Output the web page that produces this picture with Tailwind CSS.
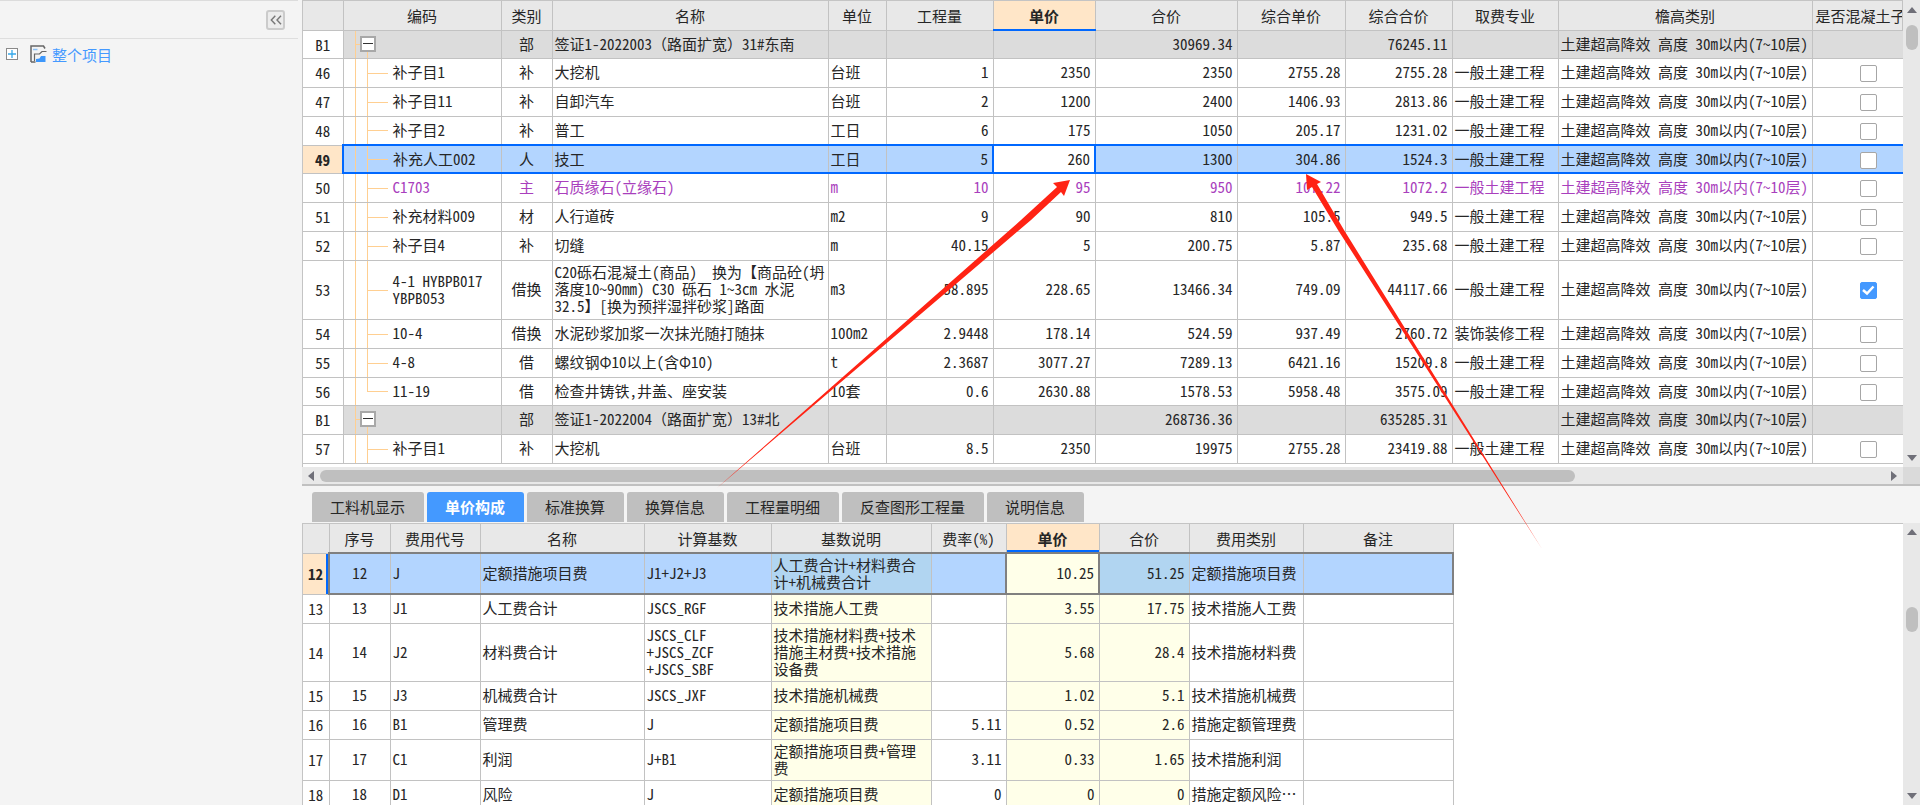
<!DOCTYPE html>
<html lang="zh-CN">
<head>
<meta charset="utf-8">
<title>整个项目</title>
<script src="https://cdn.jsdelivr.net/npm/@tailwindcss/browser@4"></script>
</head>
<body class="relative flex h-screen overflow-hidden bg-[#f4f4f4] font-['Noto_Sans_Mono_CJK_SC','Noto_Sans_CJK_SC',sans-serif] text-[15px] leading-[17px] text-[#262626]">

<aside class="w-[298px] shrink-0 border-t border-[#dcdcdc]">
  <div class="flex h-[38px] items-center justify-end border-b border-[#dedede] pr-[13px]">
    <button type="button" aria-label="收起" class="flex h-5 w-[19px] items-center justify-center rounded-[3px] border-2 border-[#cbcbcb] bg-[#ececec]">
      <svg class="h-[10px] w-[12px]" viewBox="0 0 12 10" fill="none" stroke="#777" stroke-width="1.4"><path d="M5.3 .7 1.3 5l4 4.3M11 .7 7 5l4 4.3"/></svg>
    </button>
  </div>
  <div class="flex items-center pt-[6px] pl-[6px]">
    <button type="button" aria-label="展开" class="flex size-[12px] items-center justify-center border border-[#8a8a8a] bg-white">
      <svg class="size-[8px]" viewBox="0 0 8 8" stroke="#35a8ea" stroke-width="1.3"><path d="M0 4h8M4 0v8"/></svg>
    </button>
    <svg class="ml-[12px] h-[18px] w-[17px]" viewBox="0 0 17 18" fill="none"><path d="M1 17V1h12.500l1.500 2.500" stroke="#666" stroke-width="1.500"/><path d="M1 17h4.500" stroke="#666" stroke-width="1.500"/><path d="M3 4.500h4.500" stroke="#8cc0f5" stroke-width="1.500"/><path d="M4.500 16V9H9.500L12 6.500H16.500" stroke="#666" stroke-width="1.200"/><path d="M6 17v-3l3.500-.500 1.500-2.500H15.500V17z" fill="#3d97fb"/></svg>
    <a href="#" class="ml-[5px] text-[#4499ff]">整个项目</a>
  </div>
</aside>

<main class="ml-[4px] flex min-w-0 flex-1 flex-col">
  <section class="flex h-[467px] shrink-0">
    <div class="min-w-0 flex-1 overflow-hidden border-t border-l border-[#c4c4c4] bg-white">
      <table id="items" class="w-full table-fixed border-collapse">
        <colgroup><col class="w-[40px]"><col class="w-[158px]"><col class="w-[51px]"><col class="w-[276px]"><col class="w-[58px]"><col class="w-[107px]"><col class="w-[102px]"><col class="w-[142px]"><col class="w-[108px]"><col class="w-[107px]"><col class="w-[106px]"><col class="w-[254px]"><col></colgroup>
        <thead>
          <tr class="h-[29px] bg-[#e8e8e8] *:border-r *:border-b *:border-[#c2c2c2] *:p-0 *:font-normal">
            <td></td><th>编码</th><th>类别</th><th>名称</th><th>单位</th><th>工程量</th>
            <th class="border-b-2! border-b-[#0068ff]! bg-[#ffe6c8]"><b class="font-bold">单价</b></th>
            <th>合价</th><th>综合单价</th><th>综合合价</th><th>取费专业</th><th>檐高类别</th><th class="overflow-hidden pl-[3px]! text-left whitespace-nowrap">是否混凝土子</th>
          </tr>
        </thead>
        <tbody></tbody>
      </table>
    </div>
    <div class="flex w-[17px] shrink-0 flex-col items-center bg-[#e8e8e8] pt-[7px] pb-[6px]">
      <svg class="h-[6px] w-[10px]" viewBox="0 0 10 6" fill="#6f6f78"><path d="M5 0l5 6H0z"/></svg>
      <div class="mt-3 h-[25px] w-[12px] rounded-full bg-[#bfbfbf]"></div>
      <svg class="mt-auto h-[6px] w-[10px]" viewBox="0 0 10 6" fill="#6f6f78"><path d="M0 0h10L5 6z"/></svg>
    </div>
  </section>

  <div class="flex h-[17px] shrink-0 bg-[#e8e8e8]">
    <div class="flex flex-1 items-center pr-[6px] pl-[6px]">
      <svg class="h-[10px] w-[6px]" viewBox="0 0 6 10" fill="#6f6f78"><path d="M6 0v10L0 5z"/></svg>
      <div class="ml-[6px] h-[12px] w-[79%] rounded-full bg-[#bfbfbf]"></div>
      <svg class="ml-auto h-[10px] w-[6px]" viewBox="0 0 6 10" fill="#6f6f78"><path d="M0 0v10l6-5z"/></svg>
    </div>
    <div class="w-[17px] bg-[#dadada]"></div>
  </div>

  <nav class="flex h-[39px] shrink-0 items-end gap-[3px] border-t-2 border-[#c0c0c0] pb-[1px] pl-[10px] *:h-[30px] *:rounded-t-[3px] *:border-r *:border-transparent *:px-[18px] *:pb-[1px] *:not-aria-pressed:bg-[#bfbfbf]">
    <button type="button">工料机显示</button>
    <button type="button" aria-pressed="true" class="bg-[#4499ff] font-bold text-white">单价构成</button>
    <button type="button">标准换算</button>
    <button type="button">换算信息</button>
    <button type="button">工程量明细</button>
    <button type="button">反查图形工程量</button>
    <button type="button">说明信息</button>
  </nav>

  <section class="flex min-h-0 flex-1">
    <div class="min-w-0 flex-1 overflow-hidden border-t border-l border-[#c4c4c4] bg-white">
      <table id="fees" class="w-[1150px] table-fixed border-collapse">
        <colgroup><col class="w-[26px]"><col class="w-[61px]"><col class="w-[90px]"><col class="w-[164px]"><col class="w-[127px]"><col class="w-[160px]"><col class="w-[75px]"><col class="w-[93px]"><col class="w-[90px]"><col class="w-[114px]"><col class="w-[150px]"></colgroup>
        <thead>
          <tr class="h-[29px] bg-[#e8e8e8] *:border-r *:border-b *:border-[#c2c2c2] *:p-0 *:font-normal">
            <td></td><th>序号</th><th>费用代号</th><th>名称</th><th>计算基数</th><th>基数说明</th><th>费率(%)</th>
            <th class="bg-[#ffe6c8] shadow-[inset_0_-2px_0_#0068ff]"><b class="font-bold">单价</b></th>
            <th>合价</th><th>费用类别</th><th>备注</th>
          </tr>
        </thead>
        <tbody></tbody>
      </table>
    </div>
    <div class="flex w-[17px] shrink-0 flex-col items-center bg-[#e8e8e8] pt-[6px] pb-[6px]">
      <svg class="h-[6px] w-[10px]" viewBox="0 0 10 6" fill="#6f6f78"><path d="M5 0l5 6H0z"/></svg>
      <div class="mt-[72px] h-[25px] w-[12px] rounded-full bg-[#bfbfbf]"></div>
      <svg class="mt-auto h-[6px] w-[10px]" viewBox="0 0 10 6" fill="#6f6f78"><path d="M0 0h10L5 6z"/></svg>
    </div>
  </section>
</main>

<svg class="pointer-events-none absolute top-0 left-0 h-[805px] w-[1920px]" viewBox="0 0 1920 805" fill="#ff2314">
  <path d="M717 488 1021 220 1057 187 1053 183 1070 180 1064 196 1061 192 1031 220z"/>
  <path d="M1542 549 1338 230 1312 187 1307 190 1306 174 1321 182 1317 184 1344 230z"/>
</svg>

<script>
const H = '土建超高降效 高度 30m以内(7~10层)', G = '一般土建工程';
const items = [
  ['B1','','部','签证1-2022003（路面扩宽）31#东南','','','','30969.34','','76245.11','','h-[28px]'],
  ['46','补子目1','补','大挖机','台班','1','2350','2350','2755.28','2755.28',G,'h-[29px]'],
  ['47','补子目11','补','自卸汽车','台班','2','1200','2400','1406.93','2813.86',G,'h-[29px]'],
  ['48','补子目2','补','普工','工日','6','175','1050','205.17','1231.02',G,'h-[29px]'],
  ['49','补充人工002','人','技工','工日','5','260','1300','304.86','1524.3',G,'h-[28px]'],
  ['50','C1703','主','石质缘石(立缘石)','m','10','95','950','107.22','1072.2',G,'h-[29px]'],
  ['51','补充材料009','材','人行道砖','m2','9','90','810','105.5','949.5',G,'h-[29px]'],
  ['52','补子目4','补','切缝','m','40.15','5','200.75','5.87','235.68',G,'h-[29px]'],
  ['53','4-1 HYBPB017<br>YBPB053','借换','C20砾石混凝土(商品)&nbsp; 换为【商品砼(坍<br>落度10~90mm) C30 砾石 1~3cm 水泥<br>32.5】[换为预拌湿拌砂浆]路面','m3','58.895','228.65','13466.34','749.09','44117.66',G,'h-[59px]'],
  ['54','10-4','借换','水泥砂浆加浆一次抹光随打随抹','100m2','2.9448','178.14','524.59','937.49','2760.72','装饰装修工程','h-[29px]'],
  ['55','4-8','借','螺纹钢Φ10以上(含Φ10)','t','2.3687','3077.27','7289.13','6421.16','15209.8',G,'h-[29px]'],
  ['56','11-19','借','检查井铸铁,井盖、座安装','10套','0.6','2630.88','1578.53','5958.48','3575.09',G,'h-[28px]'],
  ['B1','','部','签证1-2022004（路面扩宽）13#北','','','','268736.36','','635285.31','','h-[29px]'],
  ['57','补子目1','补','大挖机','台班','8.5','2350','19975','2755.28','23419.88',G,'h-[29px]'],
];
const cell = 'border-r border-b border-[#c2c2c2] p-0';
const body = cell + ' pb-[2px]';
const mid = body + ' text-center';
const left = body + ' px-[2px] whitespace-nowrap';
const right = body + ' px-[4px] text-right';
const blueEdge = ' border-t-2! border-b-2! border-t-[#0068ff]! border-b-[#0068ff]!';
const grayEdge = ' border-t-2! border-b-2! border-t-[#808080]! border-b-[#808080]!';

function tree(r) {
  const trunk = '<i class="absolute inset-y-0 left-[11px] w-px bg-[#ffcf91]"></i>';
  if (r[0] === 'B1') return trunk +
    '<i class="absolute top-[13px] left-[11px] h-px w-[6px] bg-[#ffcf91]"></i>' +
    '<i class="absolute top-[20px] bottom-0 left-[23px] w-px bg-[#ffcf91]"></i>' +
    '<button type="button" aria-label="折叠" class="absolute top-[5px] left-[16px] flex size-[16px] items-center justify-center border-2 border-[#a8a8a8] bg-white"><i class="h-px w-[10px] bg-[#333]"></i></button>';
  const branch = r[0] === '56'
    ? '<i class="absolute top-0 left-[23px] h-1/2 w-px bg-[#ffcf91]"></i>'
    : '<i class="absolute inset-y-0 left-[23px] w-px bg-[#ffcf91]"></i>';
  return trunk + branch + '<i class="absolute top-1/2 left-[23px] h-px w-[21px] bg-[#ffcf91]"></i><span>' + r[1] + '</span>';
}

document.querySelector('#items tbody').innerHTML = items.map(r => {
  const sel = r[0] === '49', group = r[0] === 'B1';
  const e = sel ? blueEdge : '';
  const tone = sel ? 'bg-[#b3d5ff]' : group ? 'bg-[#dcdcdc]' : r[0] === '50' ? 'text-[#a93fbd]' : '';
  return `<tr class="${tone} ${r[11]}">
    <th scope="row" class="${cell} ${sel ? 'bg-[#ffe6c8] font-bold' : 'bg-white font-normal'} text-[#262626] ">${r[0]}</th>
    <td class="${body} relative pl-[49px] ${sel ? blueEdge + ' border-l-2! border-l-[#0068ff]!' : ''}">${tree(r)}</td>
    <td class="${mid} ${e}">${r[2]}</td>
    <td class="${left} ${e}">${r[3]}</td>
    <td class="${left} ${e}">${r[4]}</td>
    <td class="${right} ${e}">${r[5]}</td>
    <td class="${right} ${sel ? 'border-2! border-[#0068ff]! bg-white' : ''}">${r[6]}</td>
    <td class="${right} ${e}">${r[7]}</td>
    <td class="${right} ${e}">${r[8]}</td>
    <td class="${right} ${e}">${r[9]}</td>
    <td class="${left} ${e}">${r[10]}</td>
    <td class="${left} ${e}">${H}</td>
    <td class="border-b border-[#c2c2c2] p-0 pl-[22px] text-center ${e}">${group ? '' :
      `<label class="relative inline-flex align-middle"><input type="checkbox" aria-label="是否混凝土子目 ${r[0]}" ${r[0] === '53' ? 'checked' : ''} class="peer size-[17px] appearance-none rounded-[2px] border border-[#a6a6a6] bg-white checked:border-[#4499ff] checked:bg-[#4499ff]"><svg class="absolute inset-0 hidden size-[17px] peer-checked:block" viewBox="0 0 17 17" fill="none" stroke="#fff" stroke-width="2.500"><path d="M3 8 7 11.500l6.500-7"/></svg></label>`}</td>
  </tr>`;
}).join('');

const fees = [
  ['12','J','定额措施项目费','J1+J2+J3','人工费合计+材料费合计+机械费合计','','10.25','51.25','定额措施项目费','h-[41px]'],
  ['13','J1','人工费合计','JSCS_RGF','技术措施人工费','','3.55','17.75','技术措施人工费','h-[29px]'],
  ['14','J2','材料费合计','JSCS_CLF<br>+JSCS_ZCF<br>+JSCS_SBF','技术措施材料费+技术措施主材费+技术措施设备费','','5.68','28.4','技术措施材料费','h-[58px]'],
  ['15','J3','机械费合计','JSCS_JXF','技术措施机械费','','1.02','5.1','技术措施机械费','h-[29px]'],
  ['16','B1','管理费','J','定额措施项目费','5.11','0.52','2.6','措施定额管理费','h-[29px]'],
  ['17','C1','利润','J+B1','定额措施项目费+管理费','3.11','0.33','1.65','技术措施利润','h-[41px]'],
  ['18','D1','风险','J','定额措施项目费','0','0','0','措施定额风险…','h-[29px]'],
];
document.querySelector('#fees tbody').innerHTML = fees.map(r => {
  const sel = r[0] === '12';
  const e = sel ? grayEdge : '';
  const tint = sel ? 'bg-[#b1d5f1]' : 'bg-[#ffffe9]';
  return `<tr class="${sel ? 'bg-[#b3d5ff]' : ''} ${r[9]}">
    <th scope="row" class="${cell} ${sel ? 'bg-[#ffe6c8] font-bold shadow-[inset_-2px_0_0_#0068ff]' : 'bg-white font-normal'} ">${r[0]}</th>
    <td class="${mid} ${sel ? grayEdge + ' border-l-2! border-l-[#808080]!' : ''}">${r[0]}</td>
    <td class="${left} ${e}">${r[1]}</td>
    <td class="${left} ${e}">${r[2]}</td>
    <td class="${left} ${e}">${r[3]}</td>
    <td class="${body} px-[2px] ${tint} ${e}">${r[4]}</td>
    <td class="${right} ${e}">${r[5]}</td>
    <td class="${right} bg-[#ffffe9] ${sel ? 'border-2! border-[#808080]!' : ''}">${r[6]}</td>
    <td class="${right} ${tint} ${e}">${r[7]}</td>
    <td class="${left} ${e}">${r[8]}</td>
    <td class="${cell} ${sel ? grayEdge + ' border-r-2! border-r-[#808080]!' : ''}"></td>
  </tr>`;
}).join('');
</script>
</body>
</html>
